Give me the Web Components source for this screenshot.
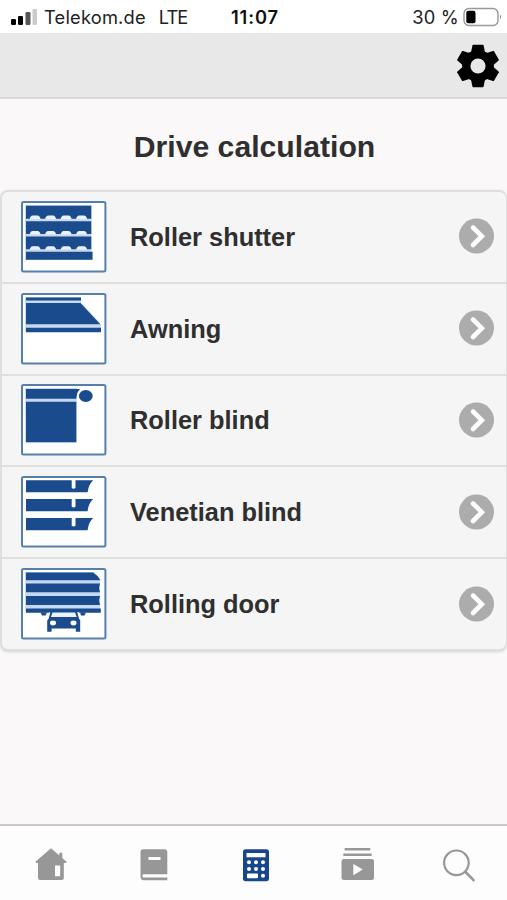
<!DOCTYPE html>
<html lang="en">
<head>
<meta charset="utf-8">
<title>Drive calculation</title>
<style>
  body {
    margin: 0;
    height: 900px;
    overflow: hidden;
    background: #faf8f9;
    font-family: "Liberation Sans", Arial, sans-serif;
  }
</style>
</head>
<body>
<drive-app></drive-app>
<script>
  const FRAME = '<rect x="1" y="1" width="83.4" height="69.4" rx="1.5" fill="#fff" stroke="#5680ac" stroke-width="2"/>';

  // Row of four light slots along the lower edge of a shutter slat
  const slots = y => [8.6, 24.1, 39.6, 55.1]
    .map(x => `<path fill="#eaf2fc" d="M${x} ${y}q.8-3.600 3-3.600h5q2.200 0 3 3.600z"/>`)
    .join('');

  // Product pictograms, drawn on an 85 x 71 board
  const PICTOGRAMS = {
    shutter: `
      <path fill="#c6d8f2" d="M4 4h66.500v55H4z"/>
      <path fill="#194b8d" d="M5 4.800h65.300v12.900H5zM5 20.300h65.300v12.700H5zM5 35.600h65.300v12.700H5zM5 50.800h66.600v8H5z"/>
      ${slots(18.2)}${slots(33.5)}${slots(48.8)}`,
    awning: `
      <path fill="#c6d8f2" d="M4 4h56l20 27.500v7H4z"/>
      <path fill="#fff" d="M60.300 3.500v6.500l20 21.500V3.500z"/>
      <path fill="#194b8d" d="M5 4.500h55v3H5zM5 10h54.500l19.800 21.300H5zM5 34.800h75v4.400H5z"/>`,
    blind: `
      <path fill="#c6d8f2" d="M4 4h51.800v54.500H4z"/>
      <path fill="#194b8d" d="M5 5h54.500q-3.500 2.500-4.300 9.700H5zM5 17.800h50.300v40.400H5z"/>
      <circle cx="64.800" cy="12" r="8.700" fill="#fff"/>
      <ellipse cx="64.800" cy="12" rx="6.900" ry="6.100" fill="#194b8d"/>`,
    venetian: `
      <g fill="#194b8d">
        <path d="M5 4.200h45.700V12q1.900 1.600 3.800 0V4.200h17.800q-4.700 3.800-5.700 12H5z"/>
        <path d="M5 23h45.700v7.800q1.900 1.600 3.800 0V23h17.800q-4.700 3.800-5.700 12.300H5z"/>
        <path d="M5 42h45.700v7.800q1.900 1.600 3.800 0V42h17.800q-4.700 3.800-5.700 12.200H5z"/>
      </g>`,
    door: `
      <path fill="#c6d8f2" d="M4 4h69l6 8v32H4z"/>
      <path fill="#194b8d" d="M5 4.600h67q4.500 2.500 7.500 7.700H5zM5 15.600h74l-1 4.500 1 4.200H5zM5 28h74l-1 4.300 1 4.600H5zM5 40.500h74.800v4.300H5z"/>
      <path fill="#194b8d" d="M19.500 44.500h6.500l-1.500 3h-3.500zM59 44.500h6l-1.500 3H60z"/>
      <path fill="#fff" d="M28.500 44h29l3.500 9H25z"/>
      <path fill="#194b8d" d="M29.300 43.500h26.800l1.900 7 1.200 2v11.200h-4.400v-3.200H30.600v3.200h-4.400V52.500l1.600-2z"/>
      <path fill="#eaf2fc" d="M31.500 44.500h22.600l1.600 4.500H29.900z"/>
      <ellipse cx="32" cy="55" rx="3" ry="2.400" fill="#fff"/>
      <ellipse cx="52.500" cy="55" rx="3" ry="2.400" fill="#fff"/>`
  };

  // Tab bar glyphs, 40 x 40
  const TABS = {
    home: '<path fill-rule="evenodd" d="M20 4.300 28.300 11.500V9.300q1.500-1.600 3 0v4.800l4.500 4-1 .9h-2v15q0 2-2 2H9q-2 0-2-2V19H5.200l-1-.9zM24 21.500v10.800h5.200V21.500z"/>',
    book: '<path fill-rule="evenodd" d="M9.500 5.300h20.800q3 0 3 3v22H9.500q-2.200 1.600 0 3.300h23.800v2.700H9.500q-3-.3-3-4V8.300q0-3 3-3zM14.500 13v3h12v-3z"/>',
    calculator: '<rect x="7" y="5.200" width="26" height="32" rx="2.600"/><g fill="#fff"><path d="M10.500 9h19v4.300h-19zM12 29.500h9q1 0 1 1v2.700q0 1-1 1h-9q-1 0-1-1v-2.700q0-1 1-1z"/><circle cx="13" cy="18.200" r="2"/><circle cx="20" cy="18.200" r="2"/><circle cx="27" cy="18.200" r="2"/><circle cx="13" cy="25" r="2"/><circle cx="20" cy="25" r="2"/><circle cx="27" cy="25" r="2"/><circle cx="27" cy="31.800" r="2"/></g>',
    video: '<path fill-rule="evenodd" d="M7.800 4h25.200q.8 1.300 0 2.600H7.800q-.8-1.300 0-2.600zM6.500 9.500h28q.8 1.200 0 2.500h-28q-.8-1.200 0-2.500zM7 15h27.500q2.500 0 2.500 2.500v16q0 2.500-2.500 2.500H7q-2.500 0-2.500-2.500v-16Q4.500 15 7 15zm9.300 5v11.300L25.800 25.600z"/>',
    search: '<g fill="none" stroke="currentColor" stroke-width="2.200" stroke-linecap="round"><circle cx="17.400" cy="18.800" r="12.300"/><path stroke-width="2.600" d="M26.500 27.800 34.500 36.200"/></g>'
  };

  class StatusBar extends HTMLElement {
    constructor() {
      super();
      this.attachShadow({ mode: 'open' });
      this.shadowRoot.innerHTML = `
        <style>
          :host {
            display: grid;
            grid-template-columns: 1fr auto 1fr;
            align-items: center;
            height: 33px;
            box-sizing: border-box;
            padding: 1px 7px 0 10px;
            background: #fff;
            color: #222;
            font: 18.3px Inter, sans-serif;
            white-space: nowrap;
          }
          .left, .right { display: flex; align-items: center; }
          .right { justify-content: flex-end; gap: 4px; margin-right: -2px; }
          .signal { margin-right: 7px; }
          .carrier { letter-spacing: 0.2px; }
          .net { margin-left: 13px; letter-spacing: -1px; }
          .time { font-weight: 600; color: #111; letter-spacing: 0.9px; }
          .percent { letter-spacing: 0.2px; }
          svg { display: block; }
        </style>
        <div class="left">
          <svg class="signal" width="27" height="18" viewBox="0 0 27 18">
            <rect x="1" y="11" width="5" height="6" rx="1.300"/>
            <rect x="8" y="8" width="5" height="9" rx="1.300"/>
            <rect x="15.500" y="4" width="5" height="13" rx="1.300" fill="#555"/>
            <rect x="22.500" y="1" width="4.500" height="16" rx="1.300" fill="#ccc"/>
          </svg>
          <span class="carrier">Telekom.de</span><span class="net">LTE</span>
        </div>
        <span class="time">11:07</span>
        <div class="right">
          <span class="percent">30 %</span>
          <svg width="39" height="20" viewBox="0 0 39 20">
            <rect x="1" y="1.500" width="34" height="17" rx="5" fill="none" stroke="#999" stroke-width="1.400"/>
            <rect x="3.300" y="3.800" width="9.200" height="12.400" rx="2"/>
            <path d="M37 7.500q2 2.500 0 5z" fill="#888"/>
          </svg>
        </div>`;
    }
  }

  class ToolBar extends HTMLElement {
    constructor() {
      super();
      this.attachShadow({ mode: 'open' });
      this.shadowRoot.innerHTML = `
        <style>
          :host {
            display: flex;
            justify-content: flex-end;
            align-items: center;
            height: 66px;
            box-sizing: border-box;
            padding: 2px 7px 0 0;
            background: #e8e8e8;
            border-bottom: 2px solid #dcdbdc;
          }
          svg { display: block; }
        </style>
        <svg width="44" height="44" viewBox="-22 -22 44 44">
          <defs><path id="tooth" d="M-7.500-11-5.600-20.500-5-21.200H5L5.600-20.500 7.500-11z"/></defs>
          <circle r="15.900"/>
          <use href="#tooth"/>
          <use href="#tooth" transform="rotate(60)"/>
          <use href="#tooth" transform="rotate(120)"/>
          <use href="#tooth" transform="rotate(180)"/>
          <use href="#tooth" transform="rotate(240)"/>
          <use href="#tooth" transform="rotate(300)"/>
          <circle r="7.600" fill="#e8e8e8"/>
        </svg>`;
    }
  }

  class DriveRow extends HTMLElement {
    constructor() {
      super();
      this.attachShadow({ mode: 'open' });
    }

    connectedCallback() {
      this.shadowRoot.innerHTML = `
        <style>
          :host {
            display: flex;
            align-items: center;
            flex: 1;
            padding: 0 12px 0 19px;
            color: #2f2f2f;
            font-size: 25.4px;
            font-weight: bold;
          }
          .label { flex: 1; margin-left: 23px; padding-top: 1px; }
          svg { display: block; }
          .arrow { margin-bottom: 1px; }
        </style>
        <svg width="86" height="72" viewBox="0 0 86 72">${FRAME}${PICTOGRAMS[this.getAttribute('icon')]}</svg>
        <span class="label"><slot></slot></span>
        <svg class="arrow" width="36" height="36" viewBox="0 0 36 36">
          <circle cx="18.500" cy="18" r="17.500" fill="#acacac"/>
          <path d="M15 9.500 23.800 18.200 15 27" fill="none" stroke="#fff" stroke-width="4.600" stroke-linecap="round"/>
        </svg>`;
    }
  }

  class DriveList extends HTMLElement {
    constructor() {
      super();
      this.attachShadow({ mode: 'open' });
      this.shadowRoot.innerHTML = `
        <style>
          :host {
            display: flex;
            flex-direction: column;
            height: 461px;
            box-sizing: border-box;
            background: #f5f5f5;
            border: 2px solid #dfdedf;
            border-right-width: 1px;
            border-radius: 8px;
            box-shadow: 0 1px 3px #d5d3d4;
          }
          ::slotted(:not(:last-child)) { border-bottom: 2px solid #dfdfdf; }
        </style>
        <slot></slot>`;
    }
  }

  class TabBar extends HTMLElement {
    constructor() {
      super();
      this.attachShadow({ mode: 'open' });
      const items = Object.keys(TABS).map(name => `
        <span class="${name === this.getAttribute('active') ? 'active' : ''}">
          <svg width="40" height="40" viewBox="0 0 40 40" fill="currentColor">${TABS[name]}</svg>
        </span>`).join('');
      this.shadowRoot.innerHTML = `
        <style>
          :host {
            display: grid;
            grid-template-columns: 102px 103px 102px 100px 104px;
            height: 76px;
            box-sizing: border-box;
            border-top: 2px solid #cac8c9;
            background: #fdfdfe;
            color: #979797;
          }
          span { display: flex; justify-content: center; padding-top: 18px; }
          .active { color: #17478a; }
          svg { display: block; }
        </style>
        ${items}`;
    }
  }

  class DriveApp extends HTMLElement {
    constructor() {
      super();
      this.attachShadow({ mode: 'open' });
      this.shadowRoot.innerHTML = `
        <style>
          :host {
            display: flex;
            flex-direction: column;
            height: 900px;
            overflow: hidden;
          }
          main { flex: 1; }
          h1 {
            margin: 0;
            height: 91px;
            line-height: 96px;
            text-align: center;
            font-size: 30.2px;
            color: #2f2f2f;
            padding-left: 2px;
          }
        </style>
        <status-bar></status-bar>
        <tool-bar></tool-bar>
        <main>
          <h1>Drive calculation</h1>
          <drive-list>
            <drive-row icon="shutter">Roller shutter</drive-row>
            <drive-row icon="awning">Awning</drive-row>
            <drive-row icon="blind">Roller blind</drive-row>
            <drive-row icon="venetian">Venetian blind</drive-row>
            <drive-row icon="door">Rolling door</drive-row>
          </drive-list>
        </main>
        <tab-bar active="calculator"></tab-bar>`;
    }
  }

  customElements.define('status-bar', StatusBar);
  customElements.define('tool-bar', ToolBar);
  customElements.define('drive-row', DriveRow);
  customElements.define('drive-list', DriveList);
  customElements.define('tab-bar', TabBar);
  customElements.define('drive-app', DriveApp);
</script>
</body>
</html>
